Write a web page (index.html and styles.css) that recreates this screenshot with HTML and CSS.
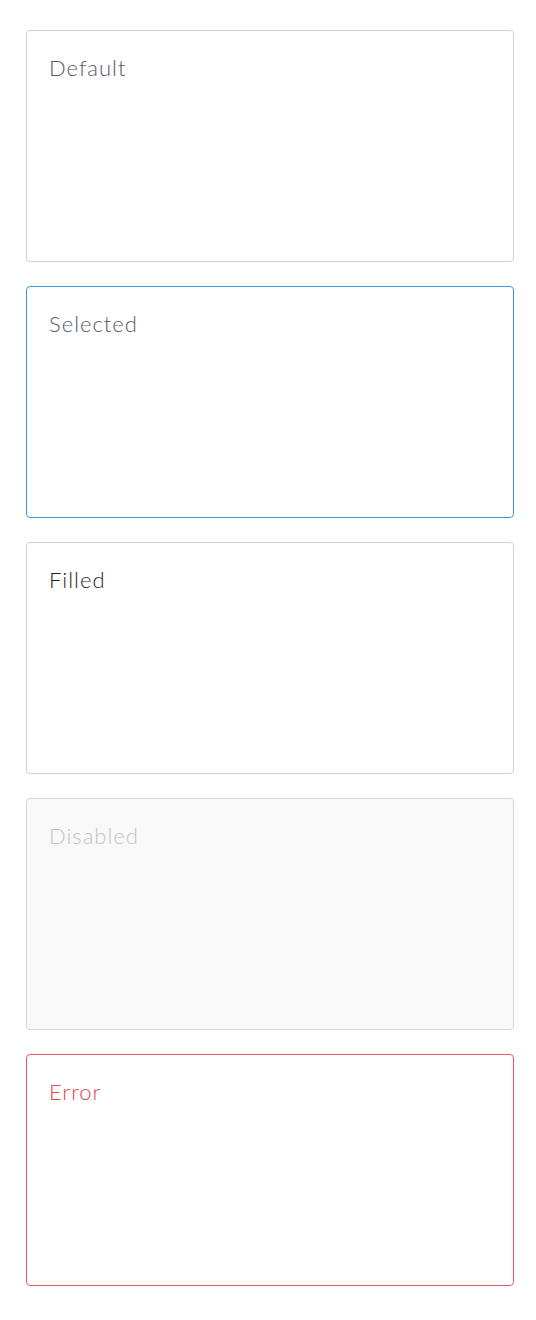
FILE: index.html
```html
<!DOCTYPE html>
<html>
<head>
<meta charset="utf-8">
<link rel="stylesheet" href="styles.css">
</head>
<body>
<div class="list">
  <div class="field default">Default</div>
  <div class="field selected">Selected</div>
  <div class="field filled">Filled</div>
  <div class="field disabled">Disabled</div>
  <div class="field error">Error</div>
</div>
</body>
</html>
```
FILE: styles.css
```css
html, body { margin: 0; padding: 0; background: #fff; }
.list {
  display: flex;
  flex-direction: column;
  gap: 24px;
  padding: 30px 0 0 26px;
}
.field {
  box-sizing: border-box;
  width: 488px;
  height: 232px;
  border: 1px solid #d2d2d2;
  border-radius: 4px;
  padding: 22px 22px;
  font-family: "Lato", "Noto Sans", sans-serif;
  font-weight: 300;
  font-size: 22px;
  letter-spacing: 1px;
  line-height: 30px;
  color: #55595f;
  background: #fff;
}
.selected { border-color: #3a9ad9; }
.filled { color: #1f1f1f; }
.disabled { background: #f9f9f9; color: #c4c4c4; border-color: #d6d6d6; }
.error { border-color: #e85a60; color: #e2454c; }
```
